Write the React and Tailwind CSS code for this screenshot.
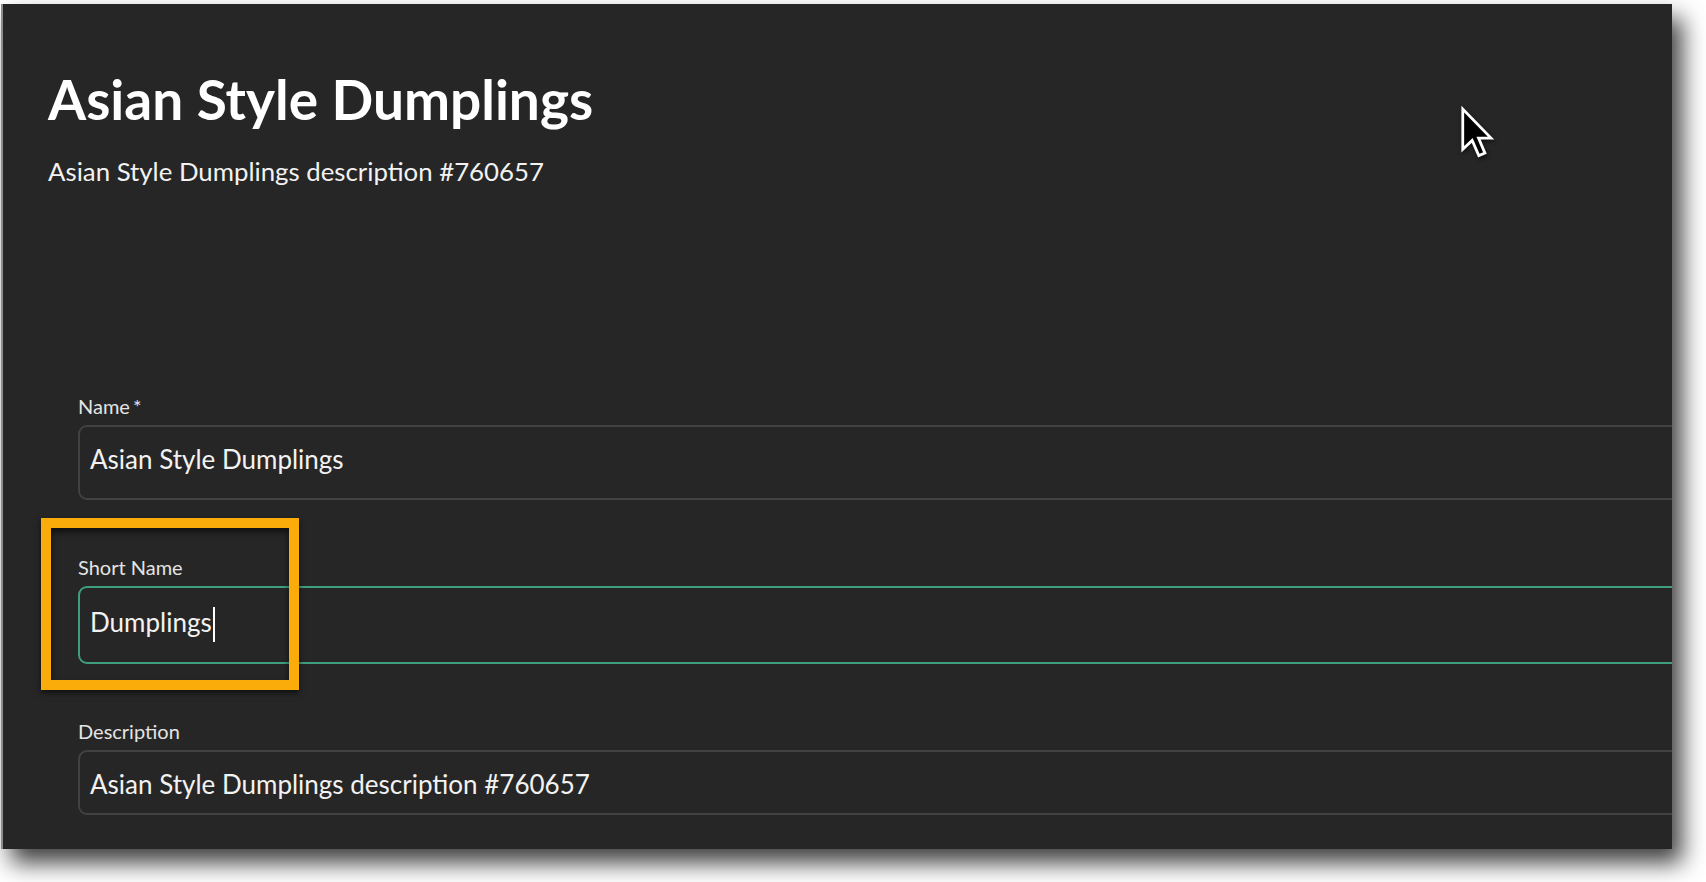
import { useState } from 'react'

const font = { fontFamily: 'Lato, "Noto Sans", sans-serif' }

function Field({ label, required, value, focused, height, pad = 'pb-[6px]' }) {
  return (
    <div className="flex flex-col">
      <label className="h-[22px] text-[20px] leading-[22px] text-[#e4e4e4]">
        {label}
        {required && <span className="ml-[3px]">*</span>}
      </label>
      <div
        className={`mt-[8px] flex w-[1700px] items-center rounded-[9px] border-2 pl-[10px] text-[26px] text-[#f2f2f2] ${height} ${pad} ${
          focused ? 'border-[#3f9f7c]' : 'border-[#424242]'
        }`}
      >
        <span>{value}</span>
        {focused && <span className="ml-[1px] mt-[4px] h-[35px] w-[2px] bg-white" />}
      </div>
    </div>
  )
}

function Pointer() {
  return (
    <svg
      width="36"
      height="56"
      viewBox="0 0 13 20"
      className="absolute left-[1457px] top-[102px] drop-shadow-[1px_2px_2px_rgba(0,0,0,0.6)]"
    >
      <path
        d="M1 1 L1 15.5 L4.4 12.3 L6.8 17.8 L9 16.9 L6.7 11.5 L11.2 11.5 Z"
        fill="#000"
        stroke="#fff"
        strokeWidth="1"
        strokeLinejoin="miter"
      />
    </svg>
  )
}

export default function App() {
  const [shortName] = useState('Dumplings')

  return (
    <div className="h-[882px] w-[1706px] overflow-hidden bg-white" style={font}>
      <div className="relative ml-[1px] mt-[4px] h-[845px] w-[1671px] overflow-hidden border-l-2 border-[#8c8c8c] bg-[#262626] shadow-[10px_14px_22px_rgba(0,0,0,0.75)]">
        <header className="pl-[45px] pt-[62px]">
          <h1 className="text-[55px] font-bold leading-[66px] text-white">Asian Style Dumplings</h1>
          <p className="mt-[23px] text-[25.8px] leading-[32px] text-[#f2f2f2]">
            Asian Style Dumplings description #760657
          </p>
        </header>

        <form className="mt-[208px] flex flex-col gap-[56px] pl-[75px]">
          <Field label="Name" required value="Asian Style Dumplings" height="h-[75px]" />
          <Field label="Short Name" value={shortName} focused height="h-[78px]" />
          <Field
            label="Description"
            value="Asian Style Dumplings description #760657"
            height="h-[65px]"
            pad="pt-[3px]"
          />
        </form>

        <div className="pointer-events-none absolute left-[38px] top-[514px] h-[172px] w-[258px] border-[10px] border-[#f9ac0a] shadow-[0_3px_6px_rgba(0,0,0,0.6),inset_0_4px_6px_rgba(0,0,0,0.6)]" />

        <Pointer />
      </div>
    </div>
  )
}
